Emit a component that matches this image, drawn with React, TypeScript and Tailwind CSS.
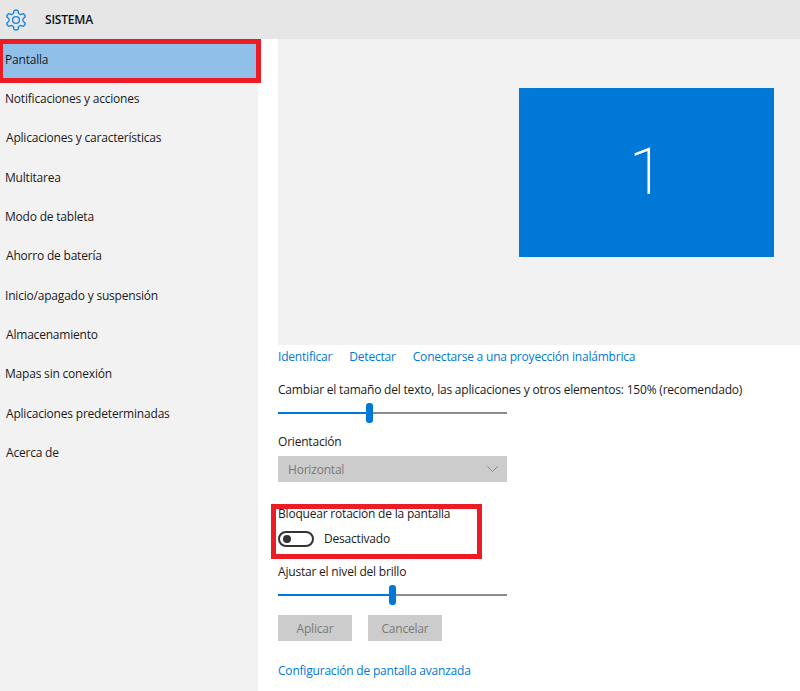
const items = [
  ["Notificaciones y acciones", "pl-[5px]"],
  ["Aplicaciones y características", "pl-[6px]"],
  ["Multitarea", "pl-[5px]"],
  ["Modo de tableta", "pl-[5px]"],
  ["Ahorro de batería", "pl-[6px]"],
  ["Inicio/apagado y suspensión", "pl-[5px]"],
  ["Almacenamiento", "pl-[6px]"],
  ["Mapas sin conexión", "pl-[5px]"],
  ["Aplicaciones predeterminadas", "pl-[6px]"],
  ["Acerca de", "pl-[6px]"],
];

function Slider({ pct }: { pct: number }) {
  return (
    <div className="relative h-5 w-[229px]">
      <div className="absolute left-0 right-0 top-[9px] h-[2px] bg-[#8c8c8c]" />
      <div className="absolute left-0 top-[9px] h-[2px] bg-[#0078d7]" style={{ width: `${pct}px` }} />
      <div className="absolute top-0 h-5 w-[7px] rounded-[3px] bg-[#0078d7]" style={{ left: `${pct - 4}px` }} />
    </div>
  );
}

export default function App() {
  return (
    <div className="relative flex h-[691px] w-[800px] flex-col overflow-hidden bg-white font-['Open_Sans','Noto_Sans',sans-serif] text-[12px] tracking-[-0.2px] text-[#1a1a1a]">
      <header className="flex h-[39px] shrink-0 items-center bg-[#e6e6e6] pl-[4px]">
        <svg width="24" height="24" viewBox="0 0 24 24" fill="none" stroke="#1f86dc" strokeWidth="1.4" strokeLinejoin="round">
          <path d="M12.22 2h-.44a2 2 0 0 0-2 2v.18a2 2 0 0 1-1 1.73l-.43.25a2 2 0 0 1-2 0l-.15-.08a2 2 0 0 0-2.73.73l-.22.38a2 2 0 0 0 .73 2.73l.15.1a2 2 0 0 1 1 1.72v.51a2 2 0 0 1-1 1.74l-.15.09a2 2 0 0 0-.73 2.73l.22.38a2 2 0 0 0 2.73.73l.15-.08a2 2 0 0 1 2 0l.43.25a2 2 0 0 1 1 1.73V20a2 2 0 0 0 2 2h.44a2 2 0 0 0 2-2v-.18a2 2 0 0 1 1-1.73l.43-.25a2 2 0 0 1 2 0l.15.08a2 2 0 0 0 2.73-.73l.22-.39a2 2 0 0 0-.73-2.73l-.15-.08a2 2 0 0 1-1-1.74v-.5a2 2 0 0 1 1-1.74l.15-.09a2 2 0 0 0 .73-2.73l-.22-.38a2 2 0 0 0-2.73-.73l-.15.08a2 2 0 0 1-2 0l-.43-.25a2 2 0 0 1-1-1.73V4a2 2 0 0 0-2-2z" />
          <circle cx="12" cy="12" r="3.4" />
        </svg>
        <span className="ml-[17px] text-[12px] font-semibold text-[#111]">SISTEMA</span>
      </header>

      <div className="flex flex-1">
        <aside className="w-[258px] shrink-0 bg-[#f2f2f2]">
          <div className="mt-[5px] flex h-[34px] items-center bg-[#90c0e9] pb-[2px] pl-[5px]">Pantalla</div>
          <ul className="mt-[1.5px]">
            {items.map(([t, p]) => (
              <li key={t} className={`flex h-[39.3px] items-center ${p}`}>{t}</li>
            ))}
          </ul>
        </aside>

        <main className="min-w-0 flex-1 pl-5">
          <div className="flex h-[306px] items-start justify-end bg-[#f2f2f2] pr-[26px] pt-[49px]">
            <div className="flex h-[169px] w-[255px] items-center justify-center bg-[#0078d7] font-['Roboto',sans-serif] text-[64px] font-extralight leading-none text-white">1</div>
          </div>

          <div className="mt-[2px] flex h-5 items-center gap-[17px] text-[#0078d7]">
            <span>Identificar</span>
            <span>Detectar</span>
            <span>Conectarse a una proyección inalámbrica</span>
          </div>

          <p className="mt-[13px] h-5 leading-5">Cambiar el tamaño del texto, las aplicaciones y otros elementos: 150% (recomendado)</p>
          <div className="mt-[3px]"><Slider pct={92} /></div>

          <p className="mt-[9px] h-5 leading-5">Orientación</p>
          <div className="mt-[4px] flex h-[26px] w-[229px] items-center justify-between bg-[#cccccc] pl-[10px] pr-[9px] pt-[1px] text-[#7a7a7a]">
            <span>Horizontal</span>
            <svg width="11" height="7" viewBox="0 0 11 7" fill="none" stroke="#8a8a8a" strokeWidth="1"><path d="M0.5 0.5 L5.5 5.5 L10.5 0.5" /></svg>
          </div>

          <p className="mt-[22px] h-5 leading-5">Bloquear rotación de la pantalla</p>
          <div className="mt-[7px] flex h-[16px] items-center">
            <div className="flex h-[16px] w-[36px] items-center rounded-full border-2 border-[#333] pl-[3px]">
              <div className="h-2 w-2 rounded-full bg-[#333]" />
            </div>
            <span className="ml-[10px]">Desactivado</span>
          </div>

          <p className="mt-[15px] h-5 leading-5">Ajustar el nivel del brillo</p>
          <div className="mt-[3px]"><Slider pct={115} /></div>

          <div className="mt-[10px] flex gap-4 text-[#7a7a7a]">
            <div className="flex h-[26px] w-[74px] items-center justify-center bg-[#cccccc] pt-[1px]">Aplicar</div>
            <div className="flex h-[26px] w-[74px] items-center justify-center bg-[#cccccc] pt-[1px]">Cancelar</div>
          </div>

          <p className="mt-[20px] h-5 leading-5 text-[#0078d7]">Configuración de pantalla avanzada</p>
        </main>
      </div>

      <div className="absolute left-0 top-[39px] h-[44px] w-[261px] border-[5px] border-l-[3px] border-[#ed1c24]" />
      <div className="absolute left-[271px] top-[504px] h-[55px] w-[211px] border-[5px] border-[#ed1c24]" />
    </div>
  );
}
